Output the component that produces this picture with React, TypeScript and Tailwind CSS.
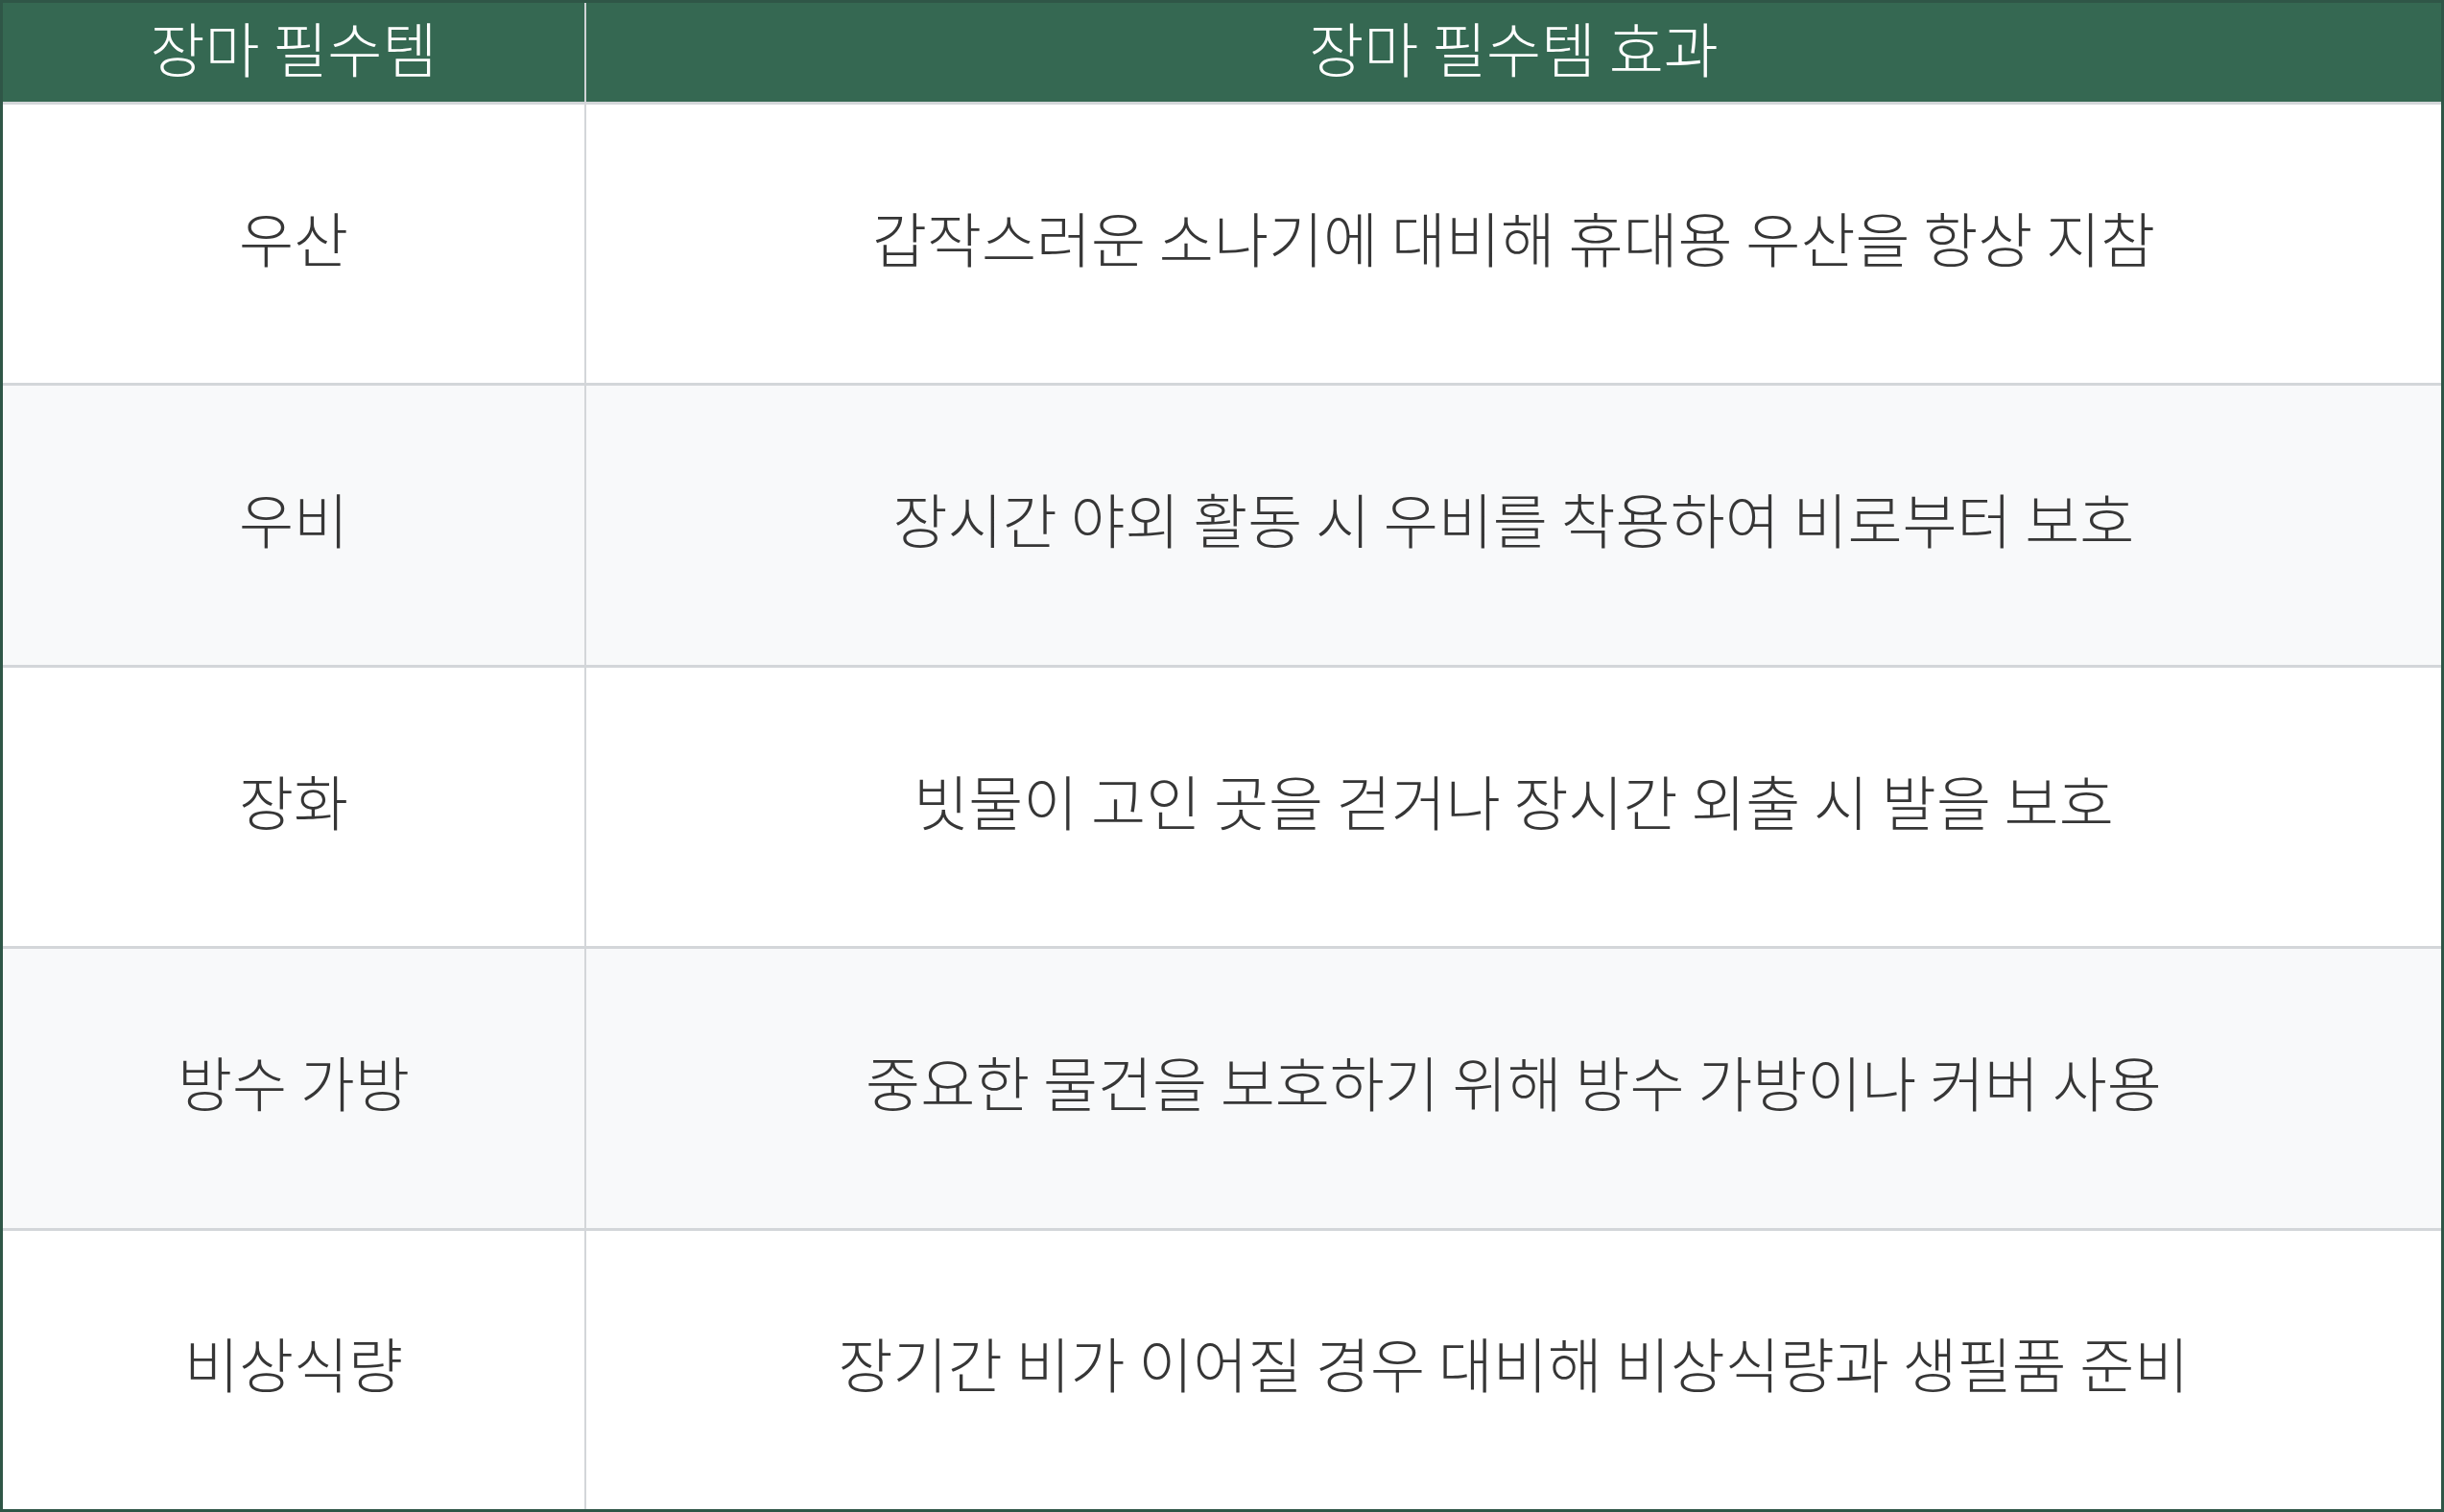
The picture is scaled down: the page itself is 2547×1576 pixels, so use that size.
const rows: [string, string][] = [
  ["우산", "갑작스러운 소나기에 대비해 휴대용 우산을 항상 지참"],
  ["우비", "장시간 야외 활동 시 우비를 착용하여 비로부터 보호"],
  ["장화", "빗물이 고인 곳을 걷거나 장시간 외출 시 발을 보호"],
  ["방수 가방", "중요한 물건을 보호하기 위해 방수 가방이나 커버 사용"],
  ["비상식량", "장기간 비가 이어질 경우 대비해 비상식량과 생필품 준비"],
];

export default function App() {
  return (
    <div
      className="flex h-[1576px] w-[2547px] flex-col border-[3px] border-[#2f5647] bg-white text-[62px] font-light text-[#363636]"
      style={{ fontFamily: '"Noto Sans CJK KR", "Noto Sans", sans-serif' }}
    >
      <div className="grid h-[103px] grid-cols-[608px_1fr] bg-[#356852] text-white">
        <div className="flex items-center justify-center border-r-2 border-[#cfd3d6] pb-[10px]">장마 필수템</div>
        <div className="flex items-center justify-center pb-[10px]">장마 필수템 효과</div>
      </div>
      {rows.map(([item, effect], i) => (
        <div
          key={item}
          className={`grid flex-1 grid-cols-[608px_1fr] border-t-[3px] border-[#d3d6d9] ${
            i % 2 === 1 ? "bg-[#f8f9fa]" : "bg-white"
          }`}
        >
          <div className="flex items-center justify-center border-r-2 border-[#d3d6d9] pb-[14px]">{item}</div>
          <div className="flex items-center justify-center pb-[14px]">{effect}</div>
        </div>
      ))}
    </div>
  );
}
